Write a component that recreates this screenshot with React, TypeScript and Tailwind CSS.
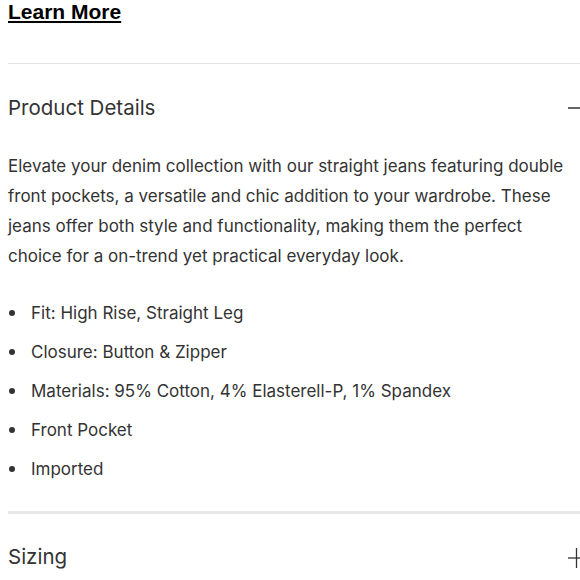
import React from 'react';

const bullets = [
  'Fit: High Rise, Straight Leg',
  'Closure: Button & Zipper',
  'Materials: 95% Cotton, 4% Elasterell-P, 1% Spandex',
  'Front Pocket',
  'Imported',
];

const Minus = () => (
  <svg width="16" height="16" viewBox="0 0 16 16" className="shrink-0">
    <line x1="0" y1="8" x2="16" y2="8" stroke="#333" strokeWidth="1.5" />
  </svg>
);

const Plus = () => (
  <svg width="16" height="20" viewBox="0 0 16 20" className="shrink-0">
    <line x1="0" y1="10" x2="16" y2="10" stroke="#333" strokeWidth="1.3" />
    <line x1="8.5" y1="0" x2="8.5" y2="20" stroke="#333" strokeWidth="1.3" />
  </svg>
);

export default function App() {
  return (
    <div className="w-[580px] h-[580px] overflow-hidden bg-white text-[#333]" style={{ fontFamily: 'Inter, sans-serif' }}>
      <div className="w-[584px] pl-2">
        <a
          href="#"
          className="block text-[21px] font-bold leading-[26px] text-black underline underline-offset-[2px] -mt-[1px]"
          style={{ fontFamily: '"Liberation Sans", Arial, sans-serif' }}
        >
          Learn More
        </a>

        <div className="mt-[38px] h-px bg-[#e3e3e3]" />

        <div className="flex items-center justify-between h-[87px] pt-[1px]">
          <h2 className="text-[20.5px] text-[#333]">Product Details</h2>
          <Minus />
        </div>

        <p className="text-[17px] leading-[30px] whitespace-nowrap">
          Elevate your denim collection with our straight jeans featuring double
          <br />
          front pockets, a versatile and chic addition to your wardrobe. These
          <br />
          jeans offer both style and functionality, making them the perfect
          <br />
          choice for a on-trend yet practical everyday look.
        </p>

        <ul className="mt-[27px] flex flex-col gap-[9px]">
          {bullets.map((b) => (
            <li key={b} className="flex items-center text-[17px] leading-[30px]">
              <span className="w-[6px] h-[6px] rounded-full bg-[#333] ml-[1px] mr-[16px]" />
              {b}
            </li>
          ))}
        </ul>

        <div className="mt-[27px] h-[3px] bg-[#e8e8e8]" />

        <div className="flex items-center justify-between h-[87px]">
          <h2 className="text-[20.5px] text-[#333]">Sizing</h2>
          <Plus />
        </div>
      </div>
    </div>
  );
}
